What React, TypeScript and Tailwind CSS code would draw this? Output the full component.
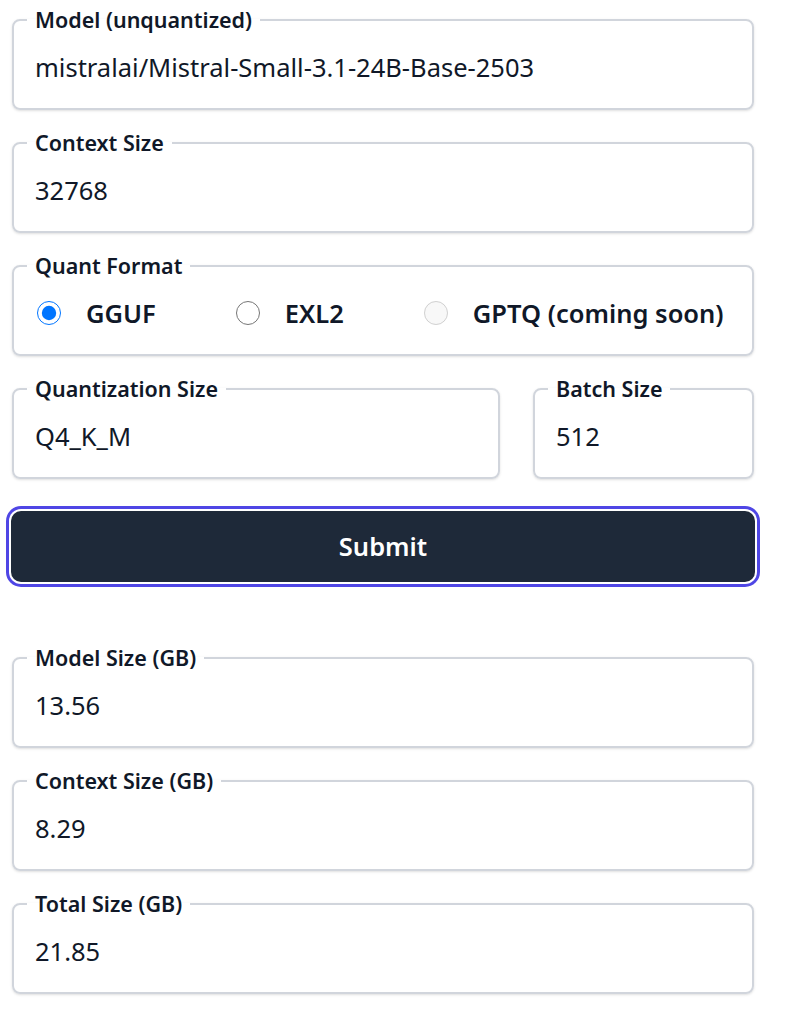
import React from 'react'

const font = { fontFamily: '"Noto Sans", "Open Sans", sans-serif' }

type FieldProps = { label: string; value: string; className?: string }

const Field = ({ label, value, className = '' }: FieldProps) => {
  return (
    <fieldset className={'border-2 border-gray-300 rounded-lg shadow-sm px-[13px] pt-[11px] pb-[19px] ' + className}>
      <legend className="px-2 text-[21.5px] leading-7 font-semibold text-gray-900">{label}</legend>
      <input
        readOnly
        value={value}
        className="w-full h-[44px] px-2 text-[25.5px] text-gray-900 bg-transparent outline-none"
      />
    </fieldset>
  )
}

const Radio = ({ label, checked, disabled }: { label: string; checked?: boolean; disabled?: boolean }) => (
  <label className="flex items-center gap-[25px]">
    <input type="radio" name="quant" defaultChecked={checked} disabled={disabled} className="m-0 w-6 h-6" />
    <span className="text-[25.5px] font-semibold text-gray-900">{label}</span>
  </label>
)

const App = () => {
  return (
    <div style={font} className="w-[742px] ml-3 pt-[6px] pb-6 flex flex-col gap-[19px] bg-white">
      <Field label="Model (unquantized)" value="mistralai/Mistral-Small-3.1-24B-Base-2503" />
      <Field label="Context Size" value="32768" />

      <fieldset className="border-2 border-gray-300 rounded-lg shadow-sm px-[13px] pt-[11px] pb-[19px]">
        <legend className="px-2 text-[21.5px] leading-7 font-semibold text-gray-900">Quant Format</legend>
        <div className="h-[44px] pl-[10px] flex items-center gap-20">
          <Radio label="GGUF" checked />
          <Radio label="EXL2" />
          <Radio label="GPTQ (coming soon)" disabled />
        </div>
      </fieldset>

      <div className="flex gap-[33px]">
        <Field label="Quantization Size" value="Q4_K_M" className="flex-1 min-w-0" />
        <Field label="Batch Size" value="512" className="w-[221px]" />
      </div>

      <button className="mt-[13px] -mx-px h-[71px] rounded-[10px] bg-gray-800 text-white text-[25.5px] font-semibold ring-[3px] ring-[#4f46e5] ring-offset-2">
        Submit
      </button>

      <div className="mt-[43px] flex flex-col gap-[19px]">
        <Field label="Model Size (GB)" value="13.56" />
        <Field label="Context Size (GB)" value="8.29" />
        <Field label="Total Size (GB)" value="21.85" />
      </div>
    </div>
  )
}

export default App
